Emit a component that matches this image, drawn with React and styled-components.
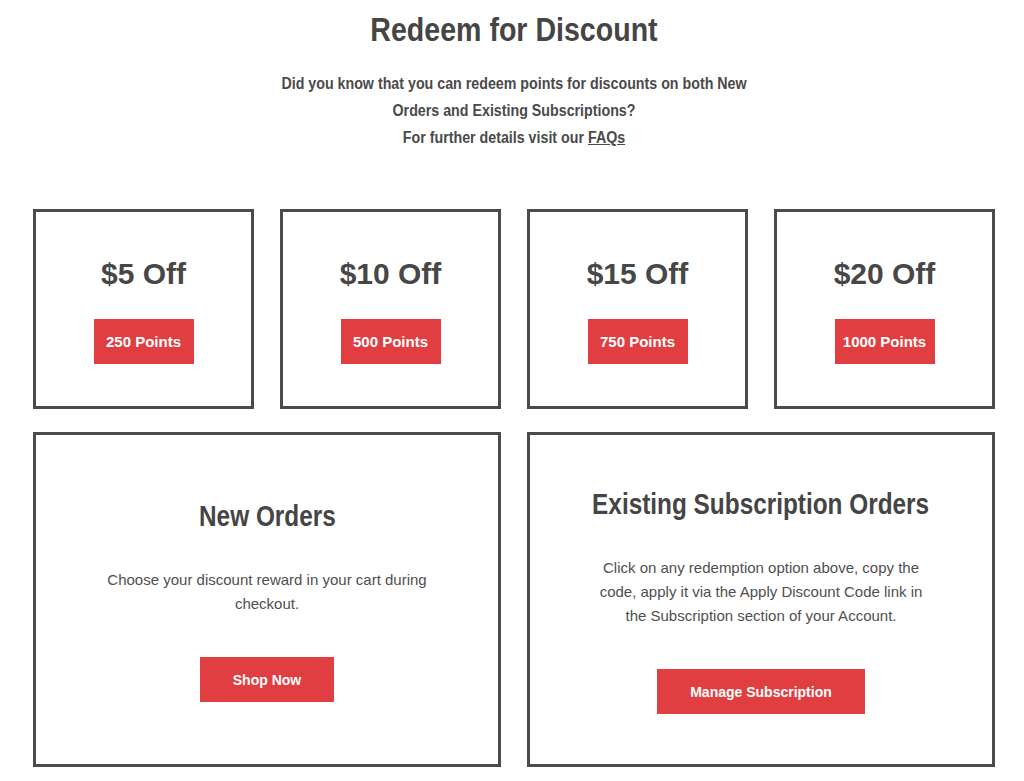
import styled, { createGlobalStyle } from 'styled-components';

const rewards = [
  { amount: '$5 Off', points: '250 Points' },
  { amount: '$10 Off', points: '500 Points' },
  { amount: '$15 Off', points: '750 Points' },
  { amount: '$20 Off', points: '1000 Points' },
];

function App() {
  return (
    <>
      <GlobalStyle />
      <Page>
        <Title>Redeem for Discount</Title>
        <Intro>
          Did you know that you can redeem points for discounts on both New Orders and Existing Subscriptions?
          <br />
          For further details visit our <IntroLink>FAQs</IntroLink>
        </Intro>
        <RewardGrid>
          {rewards.map((r) => (
            <RewardCard key={r.amount}>
              <Amount>{r.amount}</Amount>
              <PointsButton>{r.points}</PointsButton>
            </RewardCard>
          ))}
        </RewardGrid>
        <InfoGrid>
          <InfoCard>
            <InfoTitle>New Orders</InfoTitle>
            <InfoText>Choose your discount reward in your cart during checkout.</InfoText>
            <ActionButton>Shop Now</ActionButton>
          </InfoCard>
          <InfoCard>
            <InfoTitle>Existing Subscription Orders</InfoTitle>
            <InfoText>
              Click on any redemption option above, copy the code, apply it via the Apply Discount Code link in the
              Subscription section of your Account.
            </InfoText>
            <ActionButton>Manage Subscription</ActionButton>
          </InfoCard>
        </InfoGrid>
      </Page>
    </>
  );
}

const sans = `"Liberation Sans", Arial, sans-serif`;

const GlobalStyle = createGlobalStyle`
  body {
    margin: 0;
    background: #fff;
    font-family: ${sans};
    color: #474747;
  }
`;

const Page = styled.div`
  width: 962px;
  margin-left: 33px;
  padding-top: 9px;
  display: flex;
  flex-direction: column;
  align-items: center;
`;

// narrow gothic headings: no condensed face is installed, so squeeze a bold sans
const Title = styled.h1`
  margin: 0;
  font-size: 34px;
  line-height: 1.2;
  font-weight: 700;
  color: #454545;
  white-space: nowrap;
  transform: scaleX(0.84);
`;

const Intro = styled.p`
  margin: 20px 0 0;
  width: 550px;
  text-align: center;
  font-weight: 700;
  font-size: 16px;
  line-height: 27px;
  color: #4a4a4a;
  transform: scaleX(0.89);
`;

const IntroLink = styled.a`
  color: inherit;
  text-decoration: underline;
  cursor: pointer;
`;

const RewardGrid = styled.div`
  margin-top: 58px;
  width: 100%;
  display: grid;
  grid-template-columns: repeat(4, 1fr);
  column-gap: 26px;
`;

const Card = styled.div`
  box-sizing: border-box;
  border: 3px solid #4b4b4b;
  display: flex;
  flex-direction: column;
  align-items: center;
  justify-content: center;
  text-align: center;
`;

const RewardCard = styled(Card)`
  height: 200px;
  padding-top: 2px;
`;

const Amount = styled.div`
  font-weight: 700;
  font-size: 30px;
  line-height: 1.2;
  color: #474747;
  margin-bottom: 27px;
`;

const RedButton = styled.button`
  border: none;
  border-radius: 0;
  background: #e03e40;
  color: #fff;
  font-family: ${sans};
  font-weight: 700;
  height: 45px;
  cursor: pointer;
  display: flex;
  align-items: center;
  justify-content: center;
`;

const PointsButton = styled(RedButton)`
  width: 100px;
  padding: 0;
  font-size: 15px;
`;

const InfoGrid = styled.div`
  margin-top: 23px;
  width: 100%;
  display: grid;
  grid-template-columns: 1fr 1fr;
  column-gap: 26px;
`;

const InfoCard = styled(Card)`
  height: 335px;
  padding-top: 3px;
`;

const InfoTitle = styled.h2`
  margin: 0 0 34px;
  font-weight: 700;
  font-size: 29px;
  line-height: 1.2;
  color: #454545;
  white-space: nowrap;
  transform: scaleX(0.84);
`;

const InfoText = styled.p`
  margin: 0 0 41px;
  max-width: 335px;
  font-size: 15px;
  line-height: 24px;
  color: #4f4f4f;
`;

const ActionButton = styled(RedButton)`
  padding: 0 33px;
  font-size: 14px;
`;

export default App;
